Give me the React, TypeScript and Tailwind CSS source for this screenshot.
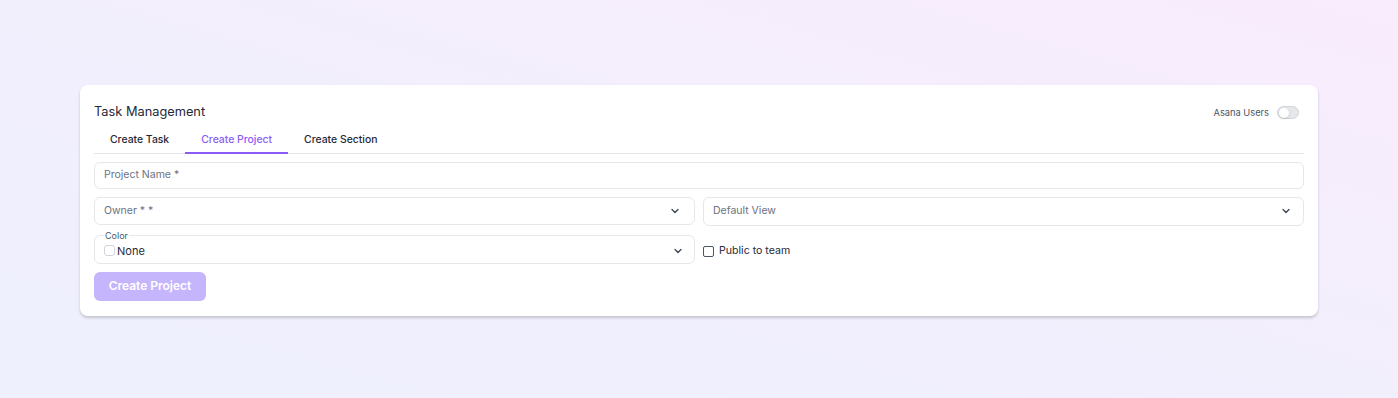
import React from "react";

function Chevron() {
  return (
    <svg width="12" height="12" viewBox="0 0 24 24" fill="none" stroke="#374151" strokeWidth="2.5" strokeLinecap="round" strokeLinejoin="round">
      <path d="M6 9l6 6 6-6" />
    </svg>
  );
}

export default function App() {
  const tabs = ["Create Task", "Create Project", "Create Section"];
  const active = 1;

  return (
    <div
      className="w-[1398px] h-[398px] bg-gradient-to-tr from-[#eef0fd] via-[#f2effd] to-[#f9ecfc] pt-[85px] px-[80px]"
      style={{ fontFamily: "Inter, 'Noto Sans', sans-serif" }}
    >
      <div className="w-[1238px] bg-white rounded-lg shadow-[0_2px_3px_rgba(0,0,0,0.18)] px-[14px] pt-[19px] pb-[15px]">
        <div className="flex items-center justify-between h-[17px]">
          <h1 className="text-[12.8px] text-[#1f2937] leading-none">Task Management</h1>
          <div className="flex items-center gap-2 mr-[5px]">
            <span className="text-[9.3px] text-[#4b5563]">Asana Users</span>
            <span className="w-[22px] h-[13px] rounded-full bg-[#e5e7eb] border border-[#d1d5db] flex items-center px-[1px]">
              <span className="w-[10px] h-[10px] rounded-full bg-white shadow-sm" />
            </span>
          </div>
        </div>

        <div className="flex border-b border-[#e5e7eb] mt-[5px]">
          {tabs.map((t, i) => (
            <button
              key={t}
              className={`px-4 pt-[6px] pb-[4px] text-[10.4px] font-medium border-b-2 -mb-px ${
                i === active ? "text-[#8b5cf6] border-[#8b5cf6]" : "text-[#1f2937] border-transparent"
              }`}
            >
              {t}
            </button>
          ))}
        </div>

        <div className="mt-[8px] h-[27px] border border-[#e5e7eb] rounded-md flex items-center px-[9px] text-[10.5px] text-[#6b7280]">
          Project Name *
        </div>

        <div className="grid grid-cols-2 gap-2 mt-[8px]">
          <div className="h-[28px] border border-[#e5e7eb] rounded-md flex items-center justify-between pl-[9px] pr-[13px] text-[10.5px] text-[#6b7280]">
            <span>Owner * *</span>
            <Chevron />
          </div>
          <div className="h-[29px] border border-[#e5e7eb] rounded-md flex items-center justify-between pl-[9px] pr-[11px] text-[10.5px] text-[#6b7280]">
            <span>Default View</span>
            <Chevron />
          </div>
        </div>

        <div className="grid grid-cols-2 gap-2 mt-[5px]">
          <fieldset className="h-[33px] border border-[#e5e7eb] rounded-md pl-[9px] pr-[10px]">
            <legend className="text-[9px] text-[#4b5563] px-[1px] leading-none">Color</legend>
            <div className="flex items-center justify-between mt-[3px]">
              <div className="flex items-center gap-[2px] text-[11px] text-[#1f2937]">
                <span className="w-[11px] h-[11px] rounded-[3px] border border-[#d1d5db] bg-white" />
                None
              </div>
              <Chevron />
            </div>
          </fieldset>
          <label className="flex items-center gap-[5px] text-[10.6px] text-[#1f2937] pt-[8px]">
            <span className="w-[11px] h-[11px] rounded-[2px] border border-[#4b5563] bg-white" />
            Public to team
          </label>
        </div>

        <button className="mt-[8px] h-[29px] w-[112px] rounded-md bg-[#c4b5fd] text-white text-[12px] font-semibold">
          Create Project
        </button>
      </div>
    </div>
  );
}
